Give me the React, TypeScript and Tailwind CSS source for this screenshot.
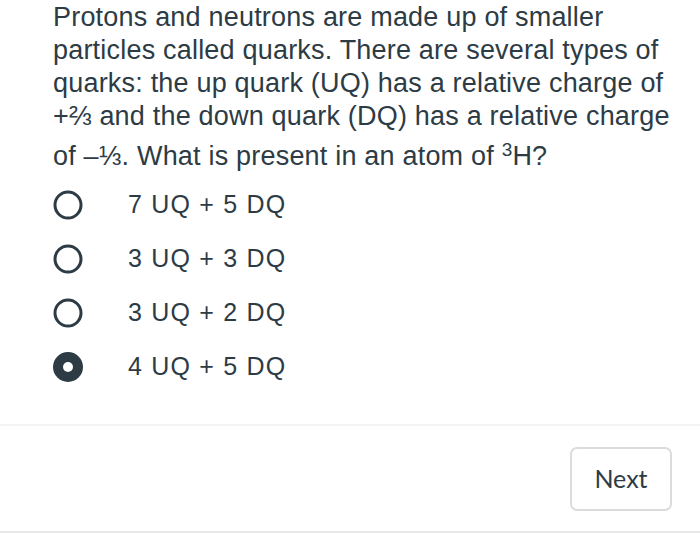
import React from "react";

const options = [
  { label: "7 UQ + 5 DQ", checked: false },
  { label: "3 UQ + 3 DQ", checked: false },
  { label: "3 UQ + 2 DQ", checked: false },
  { label: "4 UQ + 5 DQ", checked: true },
];

function Radio({ checked }: { checked: boolean }) {
  return (
    <svg width="30" height="30" viewBox="0 0 30 30">
      {checked ? (
        <>
          <circle cx="15" cy="15" r="15" fill="#2d3b45" />
          <circle cx="15" cy="15" r="5" fill="#ffffff" />
        </>
      ) : (
        <circle cx="15" cy="15" r="13" fill="none" stroke="#2d3b45" strokeWidth="3" />
      )}
    </svg>
  );
}

export default function App() {
  return (
    <div className="w-[700px] h-[533px] bg-white flex flex-col overflow-hidden">
      <div
        className="pl-[53px] pt-[1px] text-[27px] leading-[33px] tracking-[0.2px] text-[#2d3b45] whitespace-nowrap"
        style={{ fontFamily: '"Liberation Sans", Arial, sans-serif' }}
      >
        <div>Protons and neutrons are made up of smaller</div>
        <div>particles called quarks. There are several types of</div>
        <div>quarks: the up quark (UQ) has a relative charge of</div>
        <div>+⅔ and the down quark (DQ) has a relative charge</div>
        <div className="mt-[7px]">
          of –⅓. What is present in an atom of <sup className="text-[19px]">3</sup>H?
        </div>
      </div>
      <div className="flex flex-col pl-[53px] mt-[5px]">
        {options.map((o) => (
          <div key={o.label} className="flex items-center h-[54px]">
            <Radio checked={o.checked} />
            <span
              className="ml-[45px] text-[25px] tracking-[1.2px] text-[#2d3b45]"
              style={{ fontFamily: '"Liberation Sans", Arial, sans-serif' }}
            >
              {o.label}
            </span>
          </div>
        ))}
      </div>
      <div className="flex-1" />
      <div className="h-[2px] bg-[#f4f4f4]" />
      <div className="flex justify-end pr-[28px] pt-[21px] pb-[20px]">
        <button
          className="w-[102px] h-[64px] rounded-[7px] border-2 border-[#dcdcdc] bg-white text-[25px] text-[#2d3b45]"
          style={{ fontFamily: "Lato, sans-serif" }}
        >
          Next
        </button>
      </div>
      <div className="h-[2px] bg-[#e8e8e8]" />
    </div>
  );
}
